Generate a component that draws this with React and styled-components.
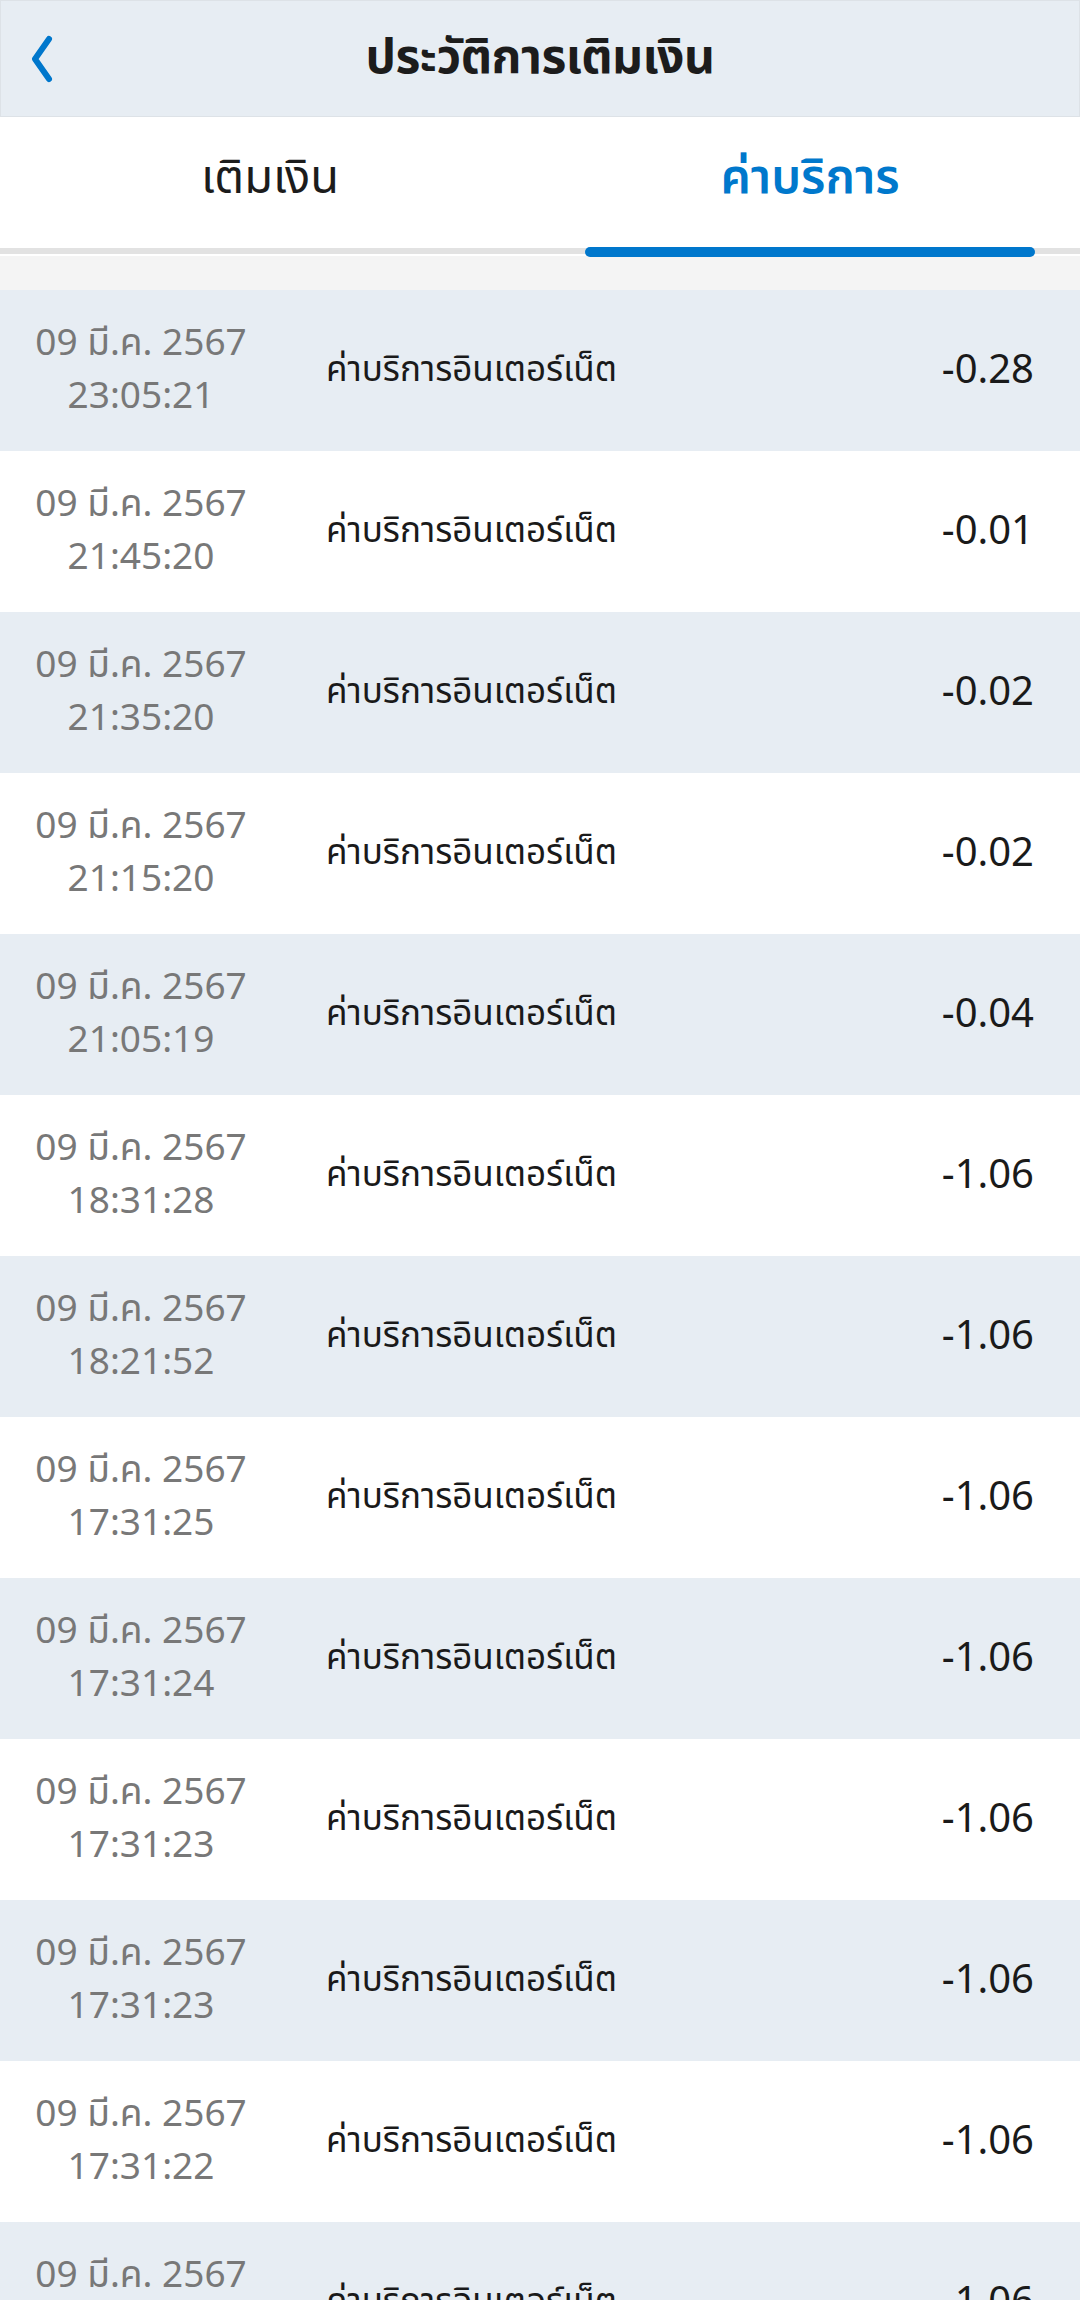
import React from "react";
import styled, { createGlobalStyle } from "styled-components";

const Global = createGlobalStyle`
  html, body { margin: 0; padding: 0; background: #ffffff; }
  body { font-family: "Noto Sans Thai", "Noto Sans Thai UI", "Noto Sans", "DejaVu Sans", sans-serif; }
  * { box-sizing: border-box; }
`;

const Page = styled.div`
  width: 1080px;
  height: 2300px;
  background: #ffffff;
  overflow: hidden;
`;

const Header = styled.header`
  height: 117px;
  background: #e7edf3;
  border: 1px solid #dde2e7;
  box-shadow: 0 1px 3px rgba(0, 0, 0, 0.08);
  display: grid;
  grid-template-columns: 100px 1fr 100px;
  align-items: center;
`;

const BackButton = styled.button`
  border: 0;
  background: transparent;
  padding: 0 0 0 28px;
  height: 100%;
  display: flex;
  align-items: center;
  cursor: pointer;
`;

const Title = styled.h1`
  margin: 0;
  text-align: center;
  font-size: 48px;
  font-weight: 700;
  color: #1c1c1c;
  letter-spacing: -0.5px;
`;

const Tabs = styled.nav`
  height: 137px;
  display: grid;
  grid-template-columns: 1fr 1fr;
  background: #ffffff;
  border-bottom: 6px solid #e2e2e2;
`;

const Tab = styled.div`
  position: relative;
  display: flex;
  align-items: center;
  justify-content: center;
  padding-bottom: 8px;
  font-size: ${(p) => (p.$active ? "48px" : "47px")};
  font-weight: ${(p) => (p.$active ? 600 : 400)};
  color: ${(p) => (p.$active ? "#0078cc" : "#1c1c1c")};
`;

const Indicator = styled.span`
  position: absolute;
  left: 45px;
  right: 45px;
  bottom: -9px;
  height: 10px;
  border-radius: 5px;
  background: #0077cc;
`;

const Spacer = styled.div`
  height: 36px;
  background: #f4f4f4;
  border-top: 2px solid #ffffff;
`;

const List = styled.div`
  display: flex;
  flex-direction: column;
`;

const Row = styled.div`
  height: 161px;
  flex-shrink: 0;
  display: grid;
  grid-template-columns: 282px 1fr auto;
  align-items: center;
  padding-right: 46px;
  background: ${(p) => (p.$shaded ? "#e7edf3" : "#ffffff")};
`;

const DateCell = styled.div`
  display: flex;
  flex-direction: column;
  align-items: center;
  color: #787878;
  font-size: 37px;
  line-height: 53px;
`;

const Desc = styled.div`
  padding-left: 44px;
  font-size: 35px;
  color: #1a1a1a;
`;

const Amount = styled.div`
  font-size: 40px;
  color: #1a1a1a;
`;

const rows = [
  ["23:05:21", "-0.28"],
  ["21:45:20", "-0.01"],
  ["21:35:20", "-0.02"],
  ["21:15:20", "-0.02"],
  ["21:05:19", "-0.04"],
  ["18:31:28", "-1.06"],
  ["18:21:52", "-1.06"],
  ["17:31:25", "-1.06"],
  ["17:31:24", "-1.06"],
  ["17:31:23", "-1.06"],
  ["17:31:23", "-1.06"],
  ["17:31:22", "-1.06"],
  ["17:31:21", "-1.06"],
];

export default function App() {
  return (
    <Page>
      <Global />
      <Header>
        <BackButton aria-label="back">
          <svg width="26" height="48" viewBox="0 0 26 48" fill="none">
            <path d="M20 4 L6 24 L20 44" stroke="#0077cc" strokeWidth="6" strokeLinecap="round" strokeLinejoin="round" />
          </svg>
        </BackButton>
        <Title>ประวัติการเติมเงิน</Title>
        <div />
      </Header>
      <Tabs>
        <Tab>เติมเงิน</Tab>
        <Tab $active>
          ค่าบริการ
          <Indicator />
        </Tab>
      </Tabs>
      <Spacer />
      <List>
        {rows.map(([time, amount], i) => (
          <Row key={i} $shaded={i % 2 === 0}>
            <DateCell>
              <span>09 มี.ค. 2567</span>
              <span>{time}</span>
            </DateCell>
            <Desc>ค่าบริการอินเตอร์เน็ต</Desc>
            <Amount>{amount}</Amount>
          </Row>
        ))}
      </List>
    </Page>
  );
}
